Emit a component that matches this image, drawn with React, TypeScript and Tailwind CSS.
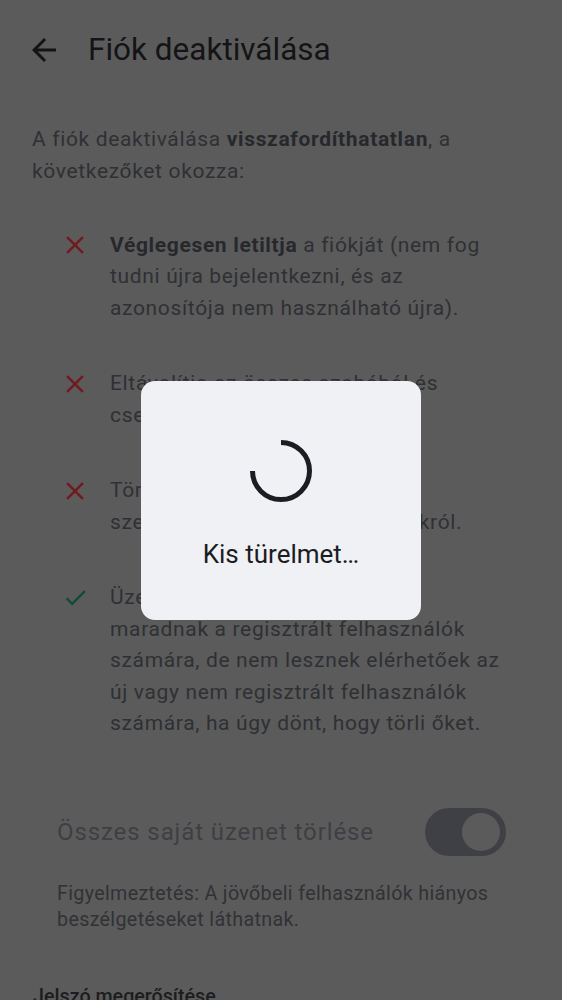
import React from "react";

interface Consequence {
  kind: "no" | "ok";
  body: React.ReactNode;
}

const consequences: Consequence[] = [
  {
    kind: "no",
    body: (
      <>
        <span className="font-bold text-[#27282c]">Véglegesen letiltja</span> a fiókját (nem fog
        tudni újra bejelentkezni, és az azonosítója nem használható újra).
      </>
    ),
  },
  {
    kind: "no",
    body: <>Eltávolítja az összes szobából és csevegésből.</>,
  },
  {
    kind: "no",
    body: (
      <>
        Törli a fiókadatait a <span className="whitespace-nowrap">személyazonosság-kiszolgálónkról.</span>
      </>
    ),
  },
  {
    kind: "ok",
    body: (
      <>
        Üzenetei továbbra is láthatóak maradnak a regisztrált felhasználók számára, de nem lesznek
        elérhetőek az új vagy nem regisztrált felhasználók számára, ha úgy dönt, hogy törli őket.
      </>
    ),
  },
];

function CloseIcon() {
  return (
    <svg viewBox="0 0 24 24" className="w-[30px] h-[30px]" fill="#701a1e" aria-hidden="true">
      <path d="M19 6.41L17.59 5 12 10.59 6.41 5 5 6.41 10.59 12 5 17.59 6.41 19 12 13.41 17.59 19 19 17.59 13.41 12z" />
    </svg>
  );
}

function CheckIcon() {
  return (
    <svg viewBox="0 0 24 24" className="w-[27px] h-[27px]" fill="#0f4a36" aria-hidden="true">
      <path d="M9 16.17L4.83 12l-1.42 1.41L9 19 21 7l-1.41-1.41z" />
    </svg>
  );
}

function Spinner() {
  return (
    <svg viewBox="0 0 64 64" className="w-16 h-16" fill="none" aria-hidden="true">
      <path d="M32 3.5 A28.5 28.5 0 1 1 3.5 32" stroke="#1b1d22" strokeWidth="5" />
    </svg>
  );
}

export default function App() {
  return (
    <div className="relative h-[1000px] overflow-hidden bg-[#5b5b5b] font-['Roboto',sans-serif]">
      {/* Top bar */}
      <header className="flex items-center h-[100px] pl-[26px] gap-[26px]">
        <svg viewBox="0 0 24 24" className="w-9 h-9" fill="#141417" aria-hidden="true">
          <path d="M20 11H7.83l5.59-5.59L12 4l-8 8 8 8 1.41-1.41L7.83 13H20v-2z" />
        </svg>
        <h1 className="text-[31.5px] leading-[40px] text-[#141417]">Fiók deaktiválása</h1>
      </header>

      <p className="mt-6 px-8 text-[21px] leading-[31.5px] tracking-[0.656px] text-[#2f3034]">
        A fiók deaktiválása <span className="font-bold text-[#27282c]">visszafordíthatatlan</span>, a
        következőket okozza:
      </p>

      <ul className="mt-[42.5px] pl-[60px] pr-[52px] flex flex-col gap-[44px]">
        {consequences.map((item, i) => (
          <li key={i} className="flex gap-5">
            <div className="w-[30px] h-[31.5px] shrink-0 flex items-center justify-center">
              {item.kind === "no" ? <CloseIcon /> : <CheckIcon />}
            </div>
            <p className="flex-1 text-[21px] leading-[31.5px] tracking-[0.656px] text-[#2f3034]">
              {item.body}
            </p>
          </li>
        ))}
      </ul>

      {/* Delete messages switch (disabled) */}
      <div className="mt-[68px] pl-[57px] pr-[56px] flex items-center justify-between h-12">
        <span className="text-[24px] tracking-[0.9px] text-[#3e3f44]">Összes saját üzenet törlése</span>
        <div className="w-[81px] h-12 rounded-full bg-[#3f4045] flex items-center justify-end pr-[6px]">
          <div className="w-[38px] h-[38px] rounded-full bg-[#5b5b5b]" />
        </div>
      </div>

      <p className="mt-[25px] pl-[57px] pr-[56px] text-[19.7px] leading-[26.25px] tracking-[0.33px] text-[#313236]">
        Figyelmeztetés: A jövőbeli felhasználók hiányos beszélgetéseket láthatnak.
      </p>

      <p className="mt-[51px] px-[33px] text-[19.7px] leading-[26px] font-medium text-[#1c1d20]">
        Jelszó megerősítése
      </p>

      {/* Progress dialog */}
      <div className="fixed inset-0 flex items-center justify-center">
        <div className="w-[280px] h-[239px] rounded-[14px] bg-[#f0f1f5] flex flex-col items-center pt-[58px]">
          <Spinner />
          <p className="mt-[34px] text-[26px] leading-[34px] text-[#1b1d22]">Kis türelmet…</p>
        </div>
      </div>
    </div>
  );
}
